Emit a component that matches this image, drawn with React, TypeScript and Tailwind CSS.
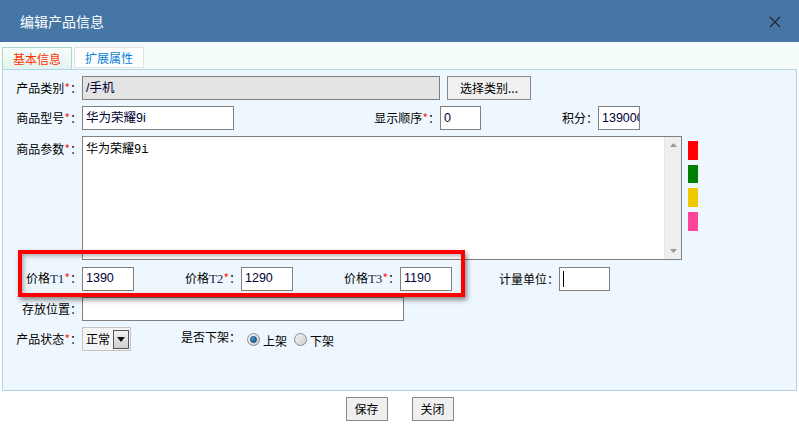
import React from "react";

const FONT = '"Noto Sans CJK SC", "Liberation Sans", sans-serif';

function Star() {
  return <span className="text-[#ff2020]">*</span>;
}

function Label({ w, children, className = "" }: { w: string; children: React.ReactNode; className?: string }) {
  return <span className={`${w} shrink-0 text-right leading-[24px] ${className}`}>{children}</span>;
}

function Field({ w, value, bg = "bg-white", caret = false }: { w: string; value?: string; bg?: string; caret?: boolean }) {
  return (
    <div
      className={`${w} h-[24px] shrink-0 border border-[#808080] ${bg} px-[3px] flex items-center overflow-hidden whitespace-nowrap text-[12.5px] text-[#000033]`}
      style={{ fontFamily: '"Liberation Sans", "Noto Sans CJK SC", sans-serif' }}
    >
      {value}
      {caret && <span className="w-px h-[16px] bg-black" />}
    </div>
  );
}

function Radio({ checked }: { checked?: boolean }) {
  return (
    <span className="w-[13px] h-[13px] rounded-full border border-[#8a8a8a] bg-gradient-to-br from-[#f4f4f4] to-[#cfcfcf] flex items-center justify-center shrink-0">
      {checked && <span className="w-[7px] h-[7px] rounded-full bg-gradient-to-br from-[#5cb4ef] to-[#0b4f8a] border border-[#0a3f70]" />}
    </span>
  );
}

function Btn({ children, w }: { children: React.ReactNode; w: string }) {
  return (
    <div className={`${w} h-[24px] border border-[#888] bg-[#f0f0f0] flex items-center justify-center text-[12px] text-black`}>
      {children}
    </div>
  );
}

function T({ children }: { children: React.ReactNode }) {
  return (
    <span style={{ fontFamily: '"Liberation Serif", serif' }} className="text-[13px] text-[#1a2a4a]">
      {children}
    </span>
  );
}

export default function App() {
  return (
    <div className="relative w-[799px] h-[428px] bg-white flex flex-col text-[12px] text-black" style={{ fontFamily: FONT }}>
      {/* title bar */}
      <div className="h-[42px] bg-[#4576a6] flex items-center justify-between pl-[20px] pr-[18px] shrink-0">
        <span className="text-white text-[14px]">编辑产品信息</span>
        <svg width="12" height="12" viewBox="0 0 12 12" className="mt-[2px]">
          <path d="M1 1 L11 11 M11 1 L1 11" stroke="#2b2b2b" strokeWidth="1.4" />
        </svg>
      </div>

      {/* tabs */}
      <div className="h-[27px] bg-[#f4fdf9] flex items-end gap-[2px] pl-[2px] shrink-0">
        <div className="w-[70px] h-[22px] border border-b-0 border-[#aed6cf] bg-gradient-to-b from-[#f6fcfa] to-[#e4f3ee] text-[#ff3300] flex items-center justify-center">
          基本信息
        </div>
        <div className="w-[70px] h-[21px] mb-[1px] border border-[#e2e2e2] bg-white text-[#0a7fd8] flex items-center justify-center">
          扩展属性
        </div>
      </div>

      {/* form panel */}
      <div className="mx-[2px] h-[322px] border border-[#b3d3e8] bg-[#eff7fe] flex flex-col gap-[6px] pt-[6px] shrink-0">
        <div className="flex items-center">
          <Label w="w-[79px]">产品类别<Star />：</Label>
          <Field w="w-[358px]" value="/手机" bg="bg-[#e4e4e4]" />
          <div className="ml-[7px]">
            <Btn w="w-[84px]">选择类别...</Btn>
          </div>
        </div>

        <div className="flex items-center">
          <Label w="w-[79px]">商品型号<Star />：</Label>
          <Field w="w-[152px]" value="华为荣耀9i" />
          <Label w="w-[206px]">显示顺序<Star />：</Label>
          <Field w="w-[41px]" value="0" />
          <Label w="w-[117px]">积分：</Label>
          <Field w="w-[42px]" value="139000" />
        </div>

        <div className="flex items-start">
          <Label w="w-[79px]" className="pt-[1px]">商品参数<Star />：</Label>
          <div className="w-[600px] h-[124px] border border-[#808080] bg-white flex shrink-0">
            <div className="flex-1 px-[3px] pt-[3px] leading-[16px]">
              华为荣耀<span style={{ fontFamily: '"Liberation Mono", monospace' }}>9i</span>
            </div>
            <div className="w-[17px] bg-[#efefef] border-l border-[#e6e6e6] flex flex-col items-center justify-between py-[6px]">
              <svg width="7" height="4" viewBox="0 0 7 4"><path d="M0 4 L3.5 0 L7 4Z" fill="#9a9a9a" /></svg>
              <svg width="7" height="4" viewBox="0 0 7 4"><path d="M0 0 L3.5 4 L7 0Z" fill="#9a9a9a" /></svg>
            </div>
          </div>
          <div className="ml-[6px] pt-[5px] flex flex-col gap-[5px]">
            <span className="w-[10px] h-[19px] bg-[#ff0000]" />
            <span className="w-[10px] h-[18px] bg-[#008000]" />
            <span className="w-[10px] h-[19px] bg-[#f0c800]" />
            <span className="w-[10px] h-[19px] bg-[#ff4499]" />
          </div>
        </div>

        <div className="flex items-center">
          <Label w="w-[79px]">价格<T>T1</T><Star />：</Label>
          <Field w="w-[52px]" value="1390" />
          <Label w="w-[107px]">价格<T>T2</T><Star />：</Label>
          <Field w="w-[52px]" value="1290" />
          <Label w="w-[107px]">价格<T>T3</T><Star />：</Label>
          <Field w="w-[52px]" value="1190" />
          <Label w="w-[107px]">计量单位：</Label>
          <Field w="w-[51px]" caret />
        </div>

        <div className="flex items-center">
          <Label w="w-[79px]">存放位置：</Label>
          <Field w="w-[322px]" />
        </div>

        <div className="flex items-center">
          <Label w="w-[79px]">产品状态<Star />：</Label>
          <div className="w-[49px] h-[24px] border border-[#c4c4c4] bg-[#f4f4f4] flex items-center pl-[3px] pr-[1px] shrink-0">
            <span className="flex-1">正常</span>
            <span className="w-[16px] h-[19px] border border-[#555] bg-gradient-to-b from-[#f2f2f2] to-[#cfcfcf] flex items-center justify-center">
              <svg width="8" height="5" viewBox="0 0 8 5"><path d="M0 0 L8 0 L4 5Z" fill="#111" /></svg>
            </span>
          </div>
          <span className="ml-[50px] leading-[24px] -mt-[4px]">是否下架：</span>
          <span className="ml-[6px] flex items-center gap-[3px]">
            <Radio checked />
            <span className="mt-[3px]">上架</span>
          </span>
          <span className="ml-[7px] flex items-center gap-[3px]">
            <Radio />
            <span className="mt-[3px]">下架</span>
          </span>
        </div>
      </div>

      {/* footer */}
      <div className="flex justify-center gap-[24px] pt-[6px]">
        <Btn w="w-[42px]">保存</Btn>
        <Btn w="w-[42px]">关闭</Btn>
      </div>

      {/* red highlight annotation */}
      <div className="absolute left-[18px] top-[250px] w-[447px] h-[47px] border-[4px] border-[#ff0000] shadow-[2px_3px_5px_rgba(0,0,0,0.45),inset_2px_2px_4px_rgba(0,0,0,0.3)] pointer-events-none" />
    </div>
  );
}
